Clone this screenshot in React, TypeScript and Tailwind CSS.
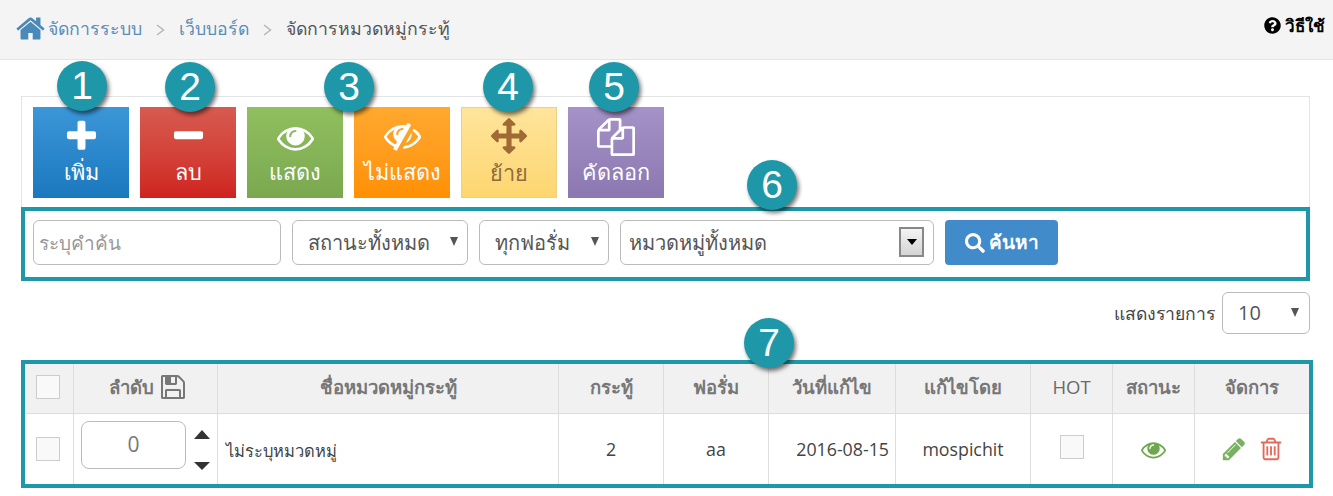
import { FaSearch, FaQuestionCircle } from 'react-icons/fa';

const FONT = 'font-["Open_Sans","Noto_Sans",sans-serif]';

// Font Awesome 4 shapes, the v5 ones in react-icons have different strokes
const FA = {
  home: 'M1472 992v480q0 26-19 45t-45 19h-384v-384h-256v384h-384q-26 0-45-19t-19-45v-480q0-1 .5-3t.5-3l575-474 575 474q1 2 1 6zm223-69l-62 74q-8 9-21 11h-3q-13 0-21-7l-692-577-692 577q-12 8-24 7-13-2-21-11l-62-74q-8-10-7-23.5t11-21.5l719-599q32-26 76-26t76 26l244 204v-195q0-14 9-23t23-9h192q14 0 23 9t9 23v408l219 182q10 8 11 21.5t-7 23.5z',
  plus: 'M1600 736v192q0 40-28 68t-68 28h-416v416q0 40-28 68t-68 28h-192q-40 0-68-28t-28-68v-416h-416q-40 0-68-28t-28-68v-192q0-40 28-68t68-28h416v-416q0-40 28-68t68-28h192q40 0 68 28t28 68v416h416q40 0 68 28t28 68z',
  minus: 'M1600 736v192q0 40-28 68t-68 28h-1216q-40 0-68-28t-28-68v-192q0-40 28-68t68-28h1216q40 0 68 28t28 68z',
  eye: 'M1664 960q-152-236-381-353 61 104 61 225 0 185-131.5 316.5t-316.5 131.5-316.5-131.5-131.5-316.5q0-121 61-225-229 117-381 353 133 205 333.5 326.5t434.5 121.5 434.5-121.5 333.5-326.5zm-720-384q0-20-14-34t-34-14q-125 0-214.5 89.5t-89.5 214.5q0 20 14 34t34 14 34-14 14-34q0-86 61-147t147-61q20 0 34-14t14-34zm848 384q0 34-20 69-140 230-376.5 368.5t-499.5 138.5-499.5-139-376.5-368q-20-35-20-69t20-69q140-229 376.5-368t499.5-139 499.5 139 376.5 368q20 35 20 69z',
  eyeSlash: 'M555 1335l78-141q-87-63-136-159t-49-203q0-121 61-225-229 117-381 353 167 258 427 375zm389-759q0-20-14-34t-34-14q-125 0-214.5 89.5t-89.5 214.5q0 20 14 34t34 14 34-14 14-34q0-86 61-147t147-61q20 0 34-14t14-34zm363-191q0 7-1 9-105 188-315 566t-316 567l-49 89q-10 16-28 16-12 0-134-70-16-10-16-28 0-12 44-87-143-65-263.5-173t-208.5-245q-20-31-20-69t20-69q153-235 380-371t496-136q89 0 180 17l54-97q10-16 28-16 5 0 18 6t31 15.5 33 18.5 31.5 18.5 19.5 11.5q16 10 16 27zm37 447q0 139-79 253.5t-209 164.5l280-502q8 45 8 84zm448 128q0 35-20 69-39 64-109 145-150 172-347.5 267t-419.5 95l74-132q212-18 392.5-137t301.5-307q-115-179-282-294l63-112q95 64 182.5 153t144.5 184q20 34 20 69z',
  arrows: 'M1792 896q0 26-19 45l-256 256q-19 19-45 19t-45-19-19-45v-128h-384v384h128q26 0 45 19t19 45-19 45l-256 256q-19 19-45 19t-45-19l-256-256q-19-19-19-45t19-45 45-19h128v-384h-384v128q0 26-19 45t-45 19-45-19l-256-256q-19-19-19-45t19-45l256-256q19-19 45-19t45 19 19 45v128h384v-384h-128q-26 0-45-19t-19-45 19-45l256-256q19-19 45-19t45 19l256 256q19 19 19 45t-19 45-45 19h-128v384h384v-128q0-26 19-45t45-19 45 19l256 256q19 19 19 45z',
  files: 'M1696 384q40 0 68 28t28 68v1216q0 40-28 68t-68 28h-960q-40 0-68-28t-28-68v-288h-544q-40 0-68-28t-28-68v-672q0-40 20-88t48-76l408-408q28-28 76-48t88-20h416q40 0 68 28t28 68v328q68-40 128-40h416zm-544 213l-299 299h299v-299zm-640-384l-299 299h299v-299zm196 647l316-316v-416h-384v416q0 40-28 68t-68 28h-416v640h512v-256q0-40 20-88t48-76zm956 804v-1152h-384v416q0 40-28 68t-68 28h-416v640h896z',
  save: 'M512 1536h768v-384h-768v384zm896 0h128v-896q0-14-10-38.5t-20-34.5l-281-281q-10-10-34-20t-39-10v416q0 40-28 68t-68 28h-576q-40 0-68-28t-28-68v-416h-128v1280h128v-416q0-40 28-68t68-28h832q40 0 68 28t28 68v416zm-384-928v-320q0-13-9.5-22.5t-22.5-9.5h-192q-13 0-22.5 9.5t-9.5 22.5v320q0 13 9.5 22.5t22.5 9.5h192q13 0 22.5-9.5t9.5-22.5zm640 32v928q0 40-28 68t-68 28h-1344q-40 0-68-28t-28-68v-1344q0-40 28-68t68-28h928q40 0 88 20t76 48l280 280q28 28 48 76t20 88z',
  pencil: 'M491 1536l91-91-235-235-91 91v107h128v128h107zm523-928q0-22-22-22-10 0-17 7l-542 542q-7 7-7 17 0 22 22 22 10 0 17-7l542-542q7-7 7-17zm-54-192l416 416-832 832h-416v-416zm683 96q0 53-37 90l-166 166-416-416 166-165q36-38 90-38 53 0 91 38l235 234q37 39 37 91z',
  trash: 'M704 736v576q0 14-9 23t-23 9h-64q-14 0-23-9t-9-23v-576q0-14 9-23t23-9h64q14 0 23 9t9 23zm256 0v576q0 14-9 23t-23 9h-64q-14 0-23-9t-9-23v-576q0-14 9-23t23-9h64q14 0 23 9t9 23zm256 0v576q0 14-9 23t-23 9h-64q-14 0-23-9t-9-23v-576q0-14 9-23t23-9h64q14 0 23 9t9 23zm128 724v-948h-896v948q0 22 7 40.5t14.5 27 10.5 8.5h832q3 0 10.5-8.5t14.5-27 7-40.5zm-672-1076h448l-48-117q-7-9-17-11h-317q-10 2-17 11zm928 32v64q0 14-9 23t-23 9h-96v948q0 83-47 143.5t-113 60.5h-832q-66 0-113-58.5t-47-141.5v-952h-96q-14 0-23-9t-9-23v-64q0-14 9-23t23-9h309l70-167q15-37 54-63t79-26h320q40 0 79 26t54 63l70 167h309q14 0 23 9t9 23z',
};

function Icon({ d, className }: { d: string; className?: string }) {
  return (
    <svg className={`shrink-0 ${className ?? ''}`} viewBox="0 0 1792 1792" fill="currentColor">
      <path d={d} />
    </svg>
  );
}

function Sep() {
  return (
    <svg className="mx-[14px] mt-[2px] h-[12px] w-[9px] text-[#b4b4b4]" viewBox="0 0 9 12" fill="none" stroke="currentColor" strokeWidth="1.4">
      <path d="M1 1l6.5 5-6.5 5" />
    </svg>
  );
}

function Badge({ n, className }: { n: number; className: string }) {
  return (
    <div className={`absolute z-10 flex h-[50px] w-[50px] items-center justify-center rounded-full bg-[#1e98a8] text-[39px] text-white shadow-[2px_3px_4px_rgba(0,0,0,0.55)] font-["Liberation_Sans",sans-serif] ${className}`}>
      {n}
    </div>
  );
}

function ToolButton({ label, icon, className }: { label: string; icon: React.ReactNode; className: string }) {
  return (
    <button className={`flex h-[91px] w-[96px] flex-col items-center text-[21.7px] leading-[30px] ${className}`}>
      <div className="flex h-[50px] w-full items-center justify-center pt-[8px]">{icon}</div>
      <div>{label}</div>
    </button>
  );
}

function SelectBox({ label, className }: { label: string; className: string }) {
  return (
    <div className={`relative h-[45px] rounded-md border border-[#bbbbbb] bg-white ${className}`}>
      <select className="h-full w-full appearance-none bg-transparent pl-[15px] text-[20px] text-[#555555] outline-none">
        <option>{label}</option>
      </select>
      <span className="pointer-events-none absolute right-[9px] top-[16px] h-0 w-0 border-x-[4.5px] border-t-[9px] border-x-transparent border-t-[#555555]" />
    </div>
  );
}

function Th({ className, children }: { className: string; children: React.ReactNode }) {
  return <div className={`flex items-center justify-center border-r border-[#dddddd] pb-[3px] text-[18.5px] font-bold text-[#777777] ${className}`}>{children}</div>;
}

function Td({ className, children }: { className: string; children?: React.ReactNode }) {
  return <div className={`flex items-center justify-center border-r border-[#dddddd] text-[17.8px] text-[#444444] ${className}`}>{children}</div>;
}

const CheckBox = () => <div className="h-[24px] w-[24px] border border-[#cccccc] bg-[#f9f9f9]" />;

export default function App() {
  return (
    <div className={`relative h-[496px] w-[1333px] overflow-hidden bg-white ${FONT}`}>
      {/* Breadcrumb */}
      <header className="flex h-[60px] items-start justify-between border-b border-[#e4e4e4] bg-[#f4f4f4] pl-[15px] pr-[8px]">
        <div className="flex h-[57px] items-center text-[17.7px] text-[#5b8db8]">
          <Icon d={FA.home} className="mr-[2px] h-[31px] w-[31px] text-[#4a8ab8]" />
          <span>จัดการระบบ</span>
          <Sep />
          <span>เว็บบอร์ด</span>
          <Sep />
          <span className="text-[#555555]">จัดการหมวดหมู่กระทู้</span>
        </div>
        <div className="mt-[13px] flex items-center gap-[4px] text-[17px] font-bold text-black">
          <FaQuestionCircle className="h-[17px] w-[17px]" />
          วิธีใช้
        </div>
      </header>

      <main className="ml-[21px] w-[1292px]">
        {/* Toolbar */}
        <div className="mt-[36px] flex h-[111px] w-[1289px] gap-[11px] border-x border-t border-[#e2e4e8] px-[11px] pt-[10px]">
          <ToolButton label="เพิ่ม" className="bg-gradient-to-b from-[#3b97d8] to-[#1a78be] text-white" icon={<Icon d={FA.plus} className="h-[37px] w-[37px]" />} />
          <ToolButton label="ลบ" className="bg-gradient-to-b from-[#d75a50] to-[#cf221f] text-white" icon={<Icon d={FA.minus} className="h-[37px] w-[37px]" />} />
          <ToolButton label="แสดง" className="bg-gradient-to-b from-[#90bf5f] to-[#7ba84f] text-white" icon={<Icon d={FA.eye} className="mb-[-3px] h-[37px] w-[37px]" />} />
          <ToolButton label="ไม่แสดง" className="bg-gradient-to-b from-[#ffa92e] to-[#ff9000] text-white" icon={<Icon d={FA.eyeSlash} className="mb-[1px] h-[37px] w-[37px]" />} />
          <ToolButton label="ย้าย" className="border border-[#ecd084] bg-gradient-to-b from-[#ffe49b] to-[#fdd66f] text-[#8e6a3c]" icon={<Icon d={FA.arrows} className="mb-[3px] h-[36px] w-[36px] text-[#a06a35]" />} />
          <ToolButton label="คัดลอก" className="bg-gradient-to-b from-[#a592c8] to-[#8b78b0] text-white" icon={<Icon d={FA.files} className="mb-[-1px] h-[38px] w-[38px]" />} />
        </div>

        {/* Search */}
        <div className="flex h-[74px] w-[1289px] items-center gap-[11px] border-4 border-[#1e98a8] pb-[3px] pl-[8px]">
          <input placeholder="ระบุคำค้น" className="h-[45px] w-[248px] rounded-md border border-[#bbbbbb] bg-white pl-[5px] text-[19px] text-[#555555] outline-none placeholder:text-[#999999]" />
          <SelectBox label="สถานะทั้งหมด" className="w-[176px]" />
          <SelectBox label="ทุกฟอรั่ม" className="w-[130px]" />
          <div className="relative h-[45px] w-[314px] rounded-md border border-[#bbbbbb] bg-white">
            <div className="flex h-full items-center pl-[8px] text-[20px] text-[#555555]">หมวดหมู่ทั้งหมด</div>
            <span className="absolute right-[9px] top-[6px] flex h-[30px] w-[25px] items-center justify-center border-2 border-[#888888] bg-gradient-to-b from-[#f4f4f4] to-[#d4d4d4]">
              <span className="h-0 w-0 border-x-[5px] border-t-[6px] border-x-transparent border-t-black" />
            </span>
          </div>
          <button className="flex h-[45px] w-[113px] items-center justify-center gap-[4px] rounded bg-[#428bca] text-[19px] font-bold text-white">
            <FaSearch className="h-[20px] w-[20px]" />
            ค้นหา
          </button>
        </div>

        {/* Page size */}
        <div className="mt-[11px] flex h-[42px] w-[1289px] items-center justify-end gap-[7px]">
          <span className="text-[17.6px] text-[#444444]">แสดงรายการ</span>
          <div className="relative h-[42px] w-[88px] rounded-md border border-[#bbbbbb]">
            <select className="h-full w-full appearance-none bg-transparent pl-[15px] text-[20px] text-[#555555] outline-none">
              <option>10</option>
            </select>
            <span className="pointer-events-none absolute right-[10px] top-[15px] h-0 w-0 border-x-[4.5px] border-t-[9px] border-x-transparent border-t-[#555555]" />
          </div>
        </div>

        {/* Table */}
        <div className="mt-[26px] h-[128px] w-[1292px] border-4 border-[#1e98a8]">
          <div className="flex h-[50px] border-b border-[#dddddd] bg-[#f1f1f1]">
            <Th className="w-[49px] pr-[2px]"><CheckBox /></Th>
            <Th className="w-[144px] gap-[5px] pl-[5px]">ลำดับ <Icon d={FA.save} className="h-[28px] w-[28px]" /></Th>
            <Th className="w-[341px]">ชื่อหมวดหมู่กระทู้</Th>
            <Th className="w-[105px]">กระทู้</Th>
            <Th className="w-[105px]">ฟอรั่ม</Th>
            <Th className="w-[127px]">วันที่แก้ไข</Th>
            <Th className="w-[135px]">แก้ไขโดย</Th>
            <Th className="w-[82px] !font-medium !text-[#6a6a6a]">HOT</Th>
            <Th className="w-[82px]">สถานะ</Th>
            <Th className="flex-1 border-r-0">จัดการ</Th>
          </div>
          <div className="flex h-[70px]">
            <Td className="w-[49px] pr-[2px]"><CheckBox /></Td>
            <Td className="w-[144px] items-start justify-start pl-[7px] pt-[7px]">
              <input defaultValue="0" className="h-[48px] w-[105px] rounded-lg border border-[#bbbbbb] pb-[2px] text-center text-[21px] text-[#777777] outline-none" />
              <div className="ml-[8px] mt-[9px] flex flex-col gap-[23px]">
                <span className="h-0 w-0 border-x-[8px] border-b-[9px] border-x-transparent border-b-[#333333]" />
                <span className="h-0 w-0 border-x-[8px] border-t-[8px] border-x-transparent border-t-[#333333]" />
              </div>
            </Td>
            <Td className="w-[341px] justify-start pl-[8px] pt-[4px] !text-[16.5px] text-[#333333]">ไม่ระบุหมวดหมู่</Td>
            <Td className="w-[105px]">2</Td>
            <Td className="w-[105px]">aa</Td>
            <Td className="w-[127px] justify-end pr-[6px]">2016-08-15</Td>
            <Td className="w-[135px]">mospichit</Td>
            <Td className="w-[82px] pb-[4px]"><CheckBox /></Td>
            <Td className="w-[82px]"><Icon d={FA.eye} className="h-[25px] w-[25px] text-[#6ea84e]" /></Td>
            <Td className="flex-1 gap-[11px] border-r-0">
              <Icon d={FA.pencil} className="h-[26px] w-[26px] text-[#78b260]" />
              <Icon d={FA.trash} className="h-[26px] w-[26px] text-[#e4695c]" />
            </Td>
          </div>
        </div>
      </main>

      <Badge n={1} className="left-[57px] top-[61px]" />
      <Badge n={2} className="left-[165px] top-[62px]" />
      <Badge n={3} className="left-[324px] top-[62px]" />
      <Badge n={4} className="left-[483px] top-[62px]" />
      <Badge n={5} className="left-[589px] top-[62px]" />
      <Badge n={6} className="left-[747px] top-[160px]" />
      <Badge n={7} className="left-[744px] top-[318px]" />
    </div>
  );
}
